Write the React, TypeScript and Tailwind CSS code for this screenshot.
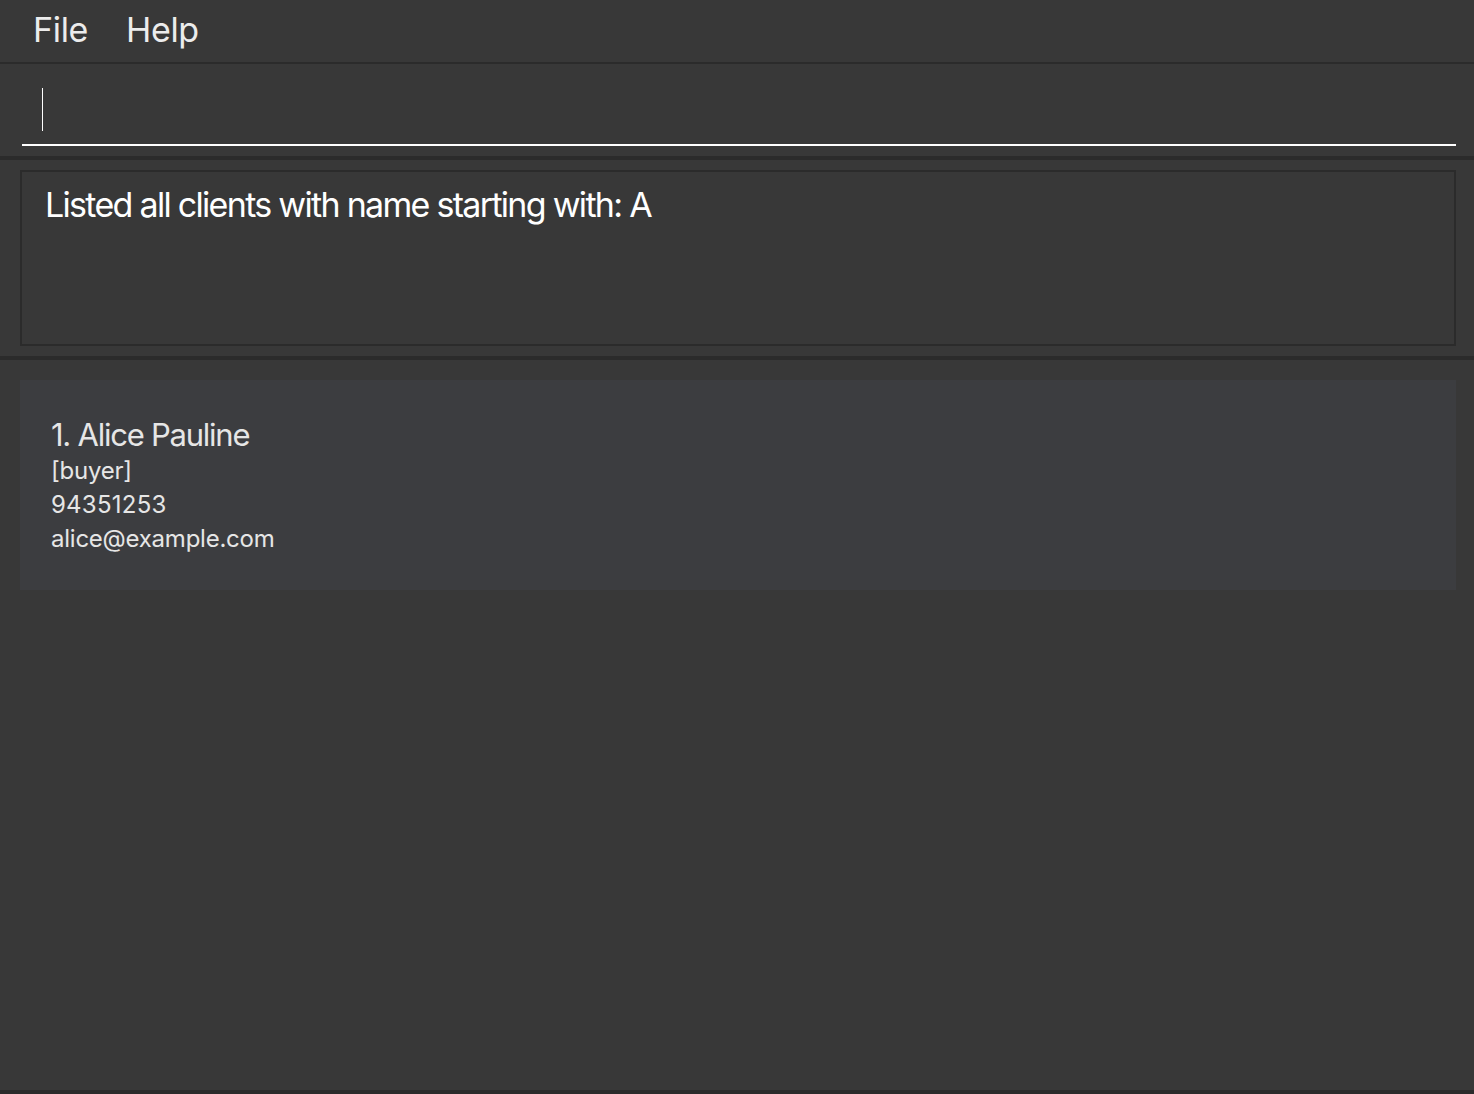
import React from 'react';

const font = { fontFamily: 'Inter, "Noto Sans", sans-serif' };

export default function App() {
    return (
        <div className="w-[1474px] h-[1094px] bg-[#383838] flex flex-col text-white" style={font}>
            {/* menu bar */}
            <div className="h-[62px] flex items-center gap-[38px] pl-[33px] pb-[3px] text-[34px] tracking-[-0.01em] text-[#ececec] shrink-0">
                <span>File</span>
                <span>Help</span>
            </div>
            <div className="h-[2px] bg-[#2b2b2b] shrink-0" />

            {/* command box */}
            <div className="h-[92px] pl-[22px] pr-[18px] pt-[24px] shrink-0">
                <div className="h-[58px] border-b-2 border-white pl-[20px]">
                    <div className="w-px h-[43px] bg-white" />
                </div>
            </div>
            <div className="h-[4px] bg-[#2b2b2b] shrink-0" />

            {/* result display */}
            <div className="h-[196px] pl-[20px] pr-[18px] pt-[10px] shrink-0">
                <div className="h-[176px] border-2 border-[#2b2b2b] px-[23px] pt-[11px]">
                    <p className="text-[34px] tracking-[-0.05em] leading-[44px]">Listed all clients with name starting with: A</p>
                </div>
            </div>
            <div className="h-[4px] bg-[#2b2b2b] shrink-0" />

            {/* client list */}
            <div className="flex-1 pl-[20px] pr-[18px] pt-[20px]">
                <div className="h-[210px] bg-[#3c3d40] pl-[31px] pt-[36px] text-[#e6e6e6]">
                    <div className="text-[31px] leading-[38px] tracking-[-0.04em]">1. Alice Pauline</div>
                    <div className="text-[24px] leading-[34px] tracking-[-0.01em]">[buyer]</div>
                    <div className="text-[24px] leading-[34px] tracking-[0.01em]">94351253</div>
                    <div className="text-[24px] leading-[34px] tracking-[-0.01em]">alice@example.com</div>
                </div>
            </div>
            <div className="h-[4px] bg-[#2b2b2b] shrink-0" />
        </div>
    );
}
